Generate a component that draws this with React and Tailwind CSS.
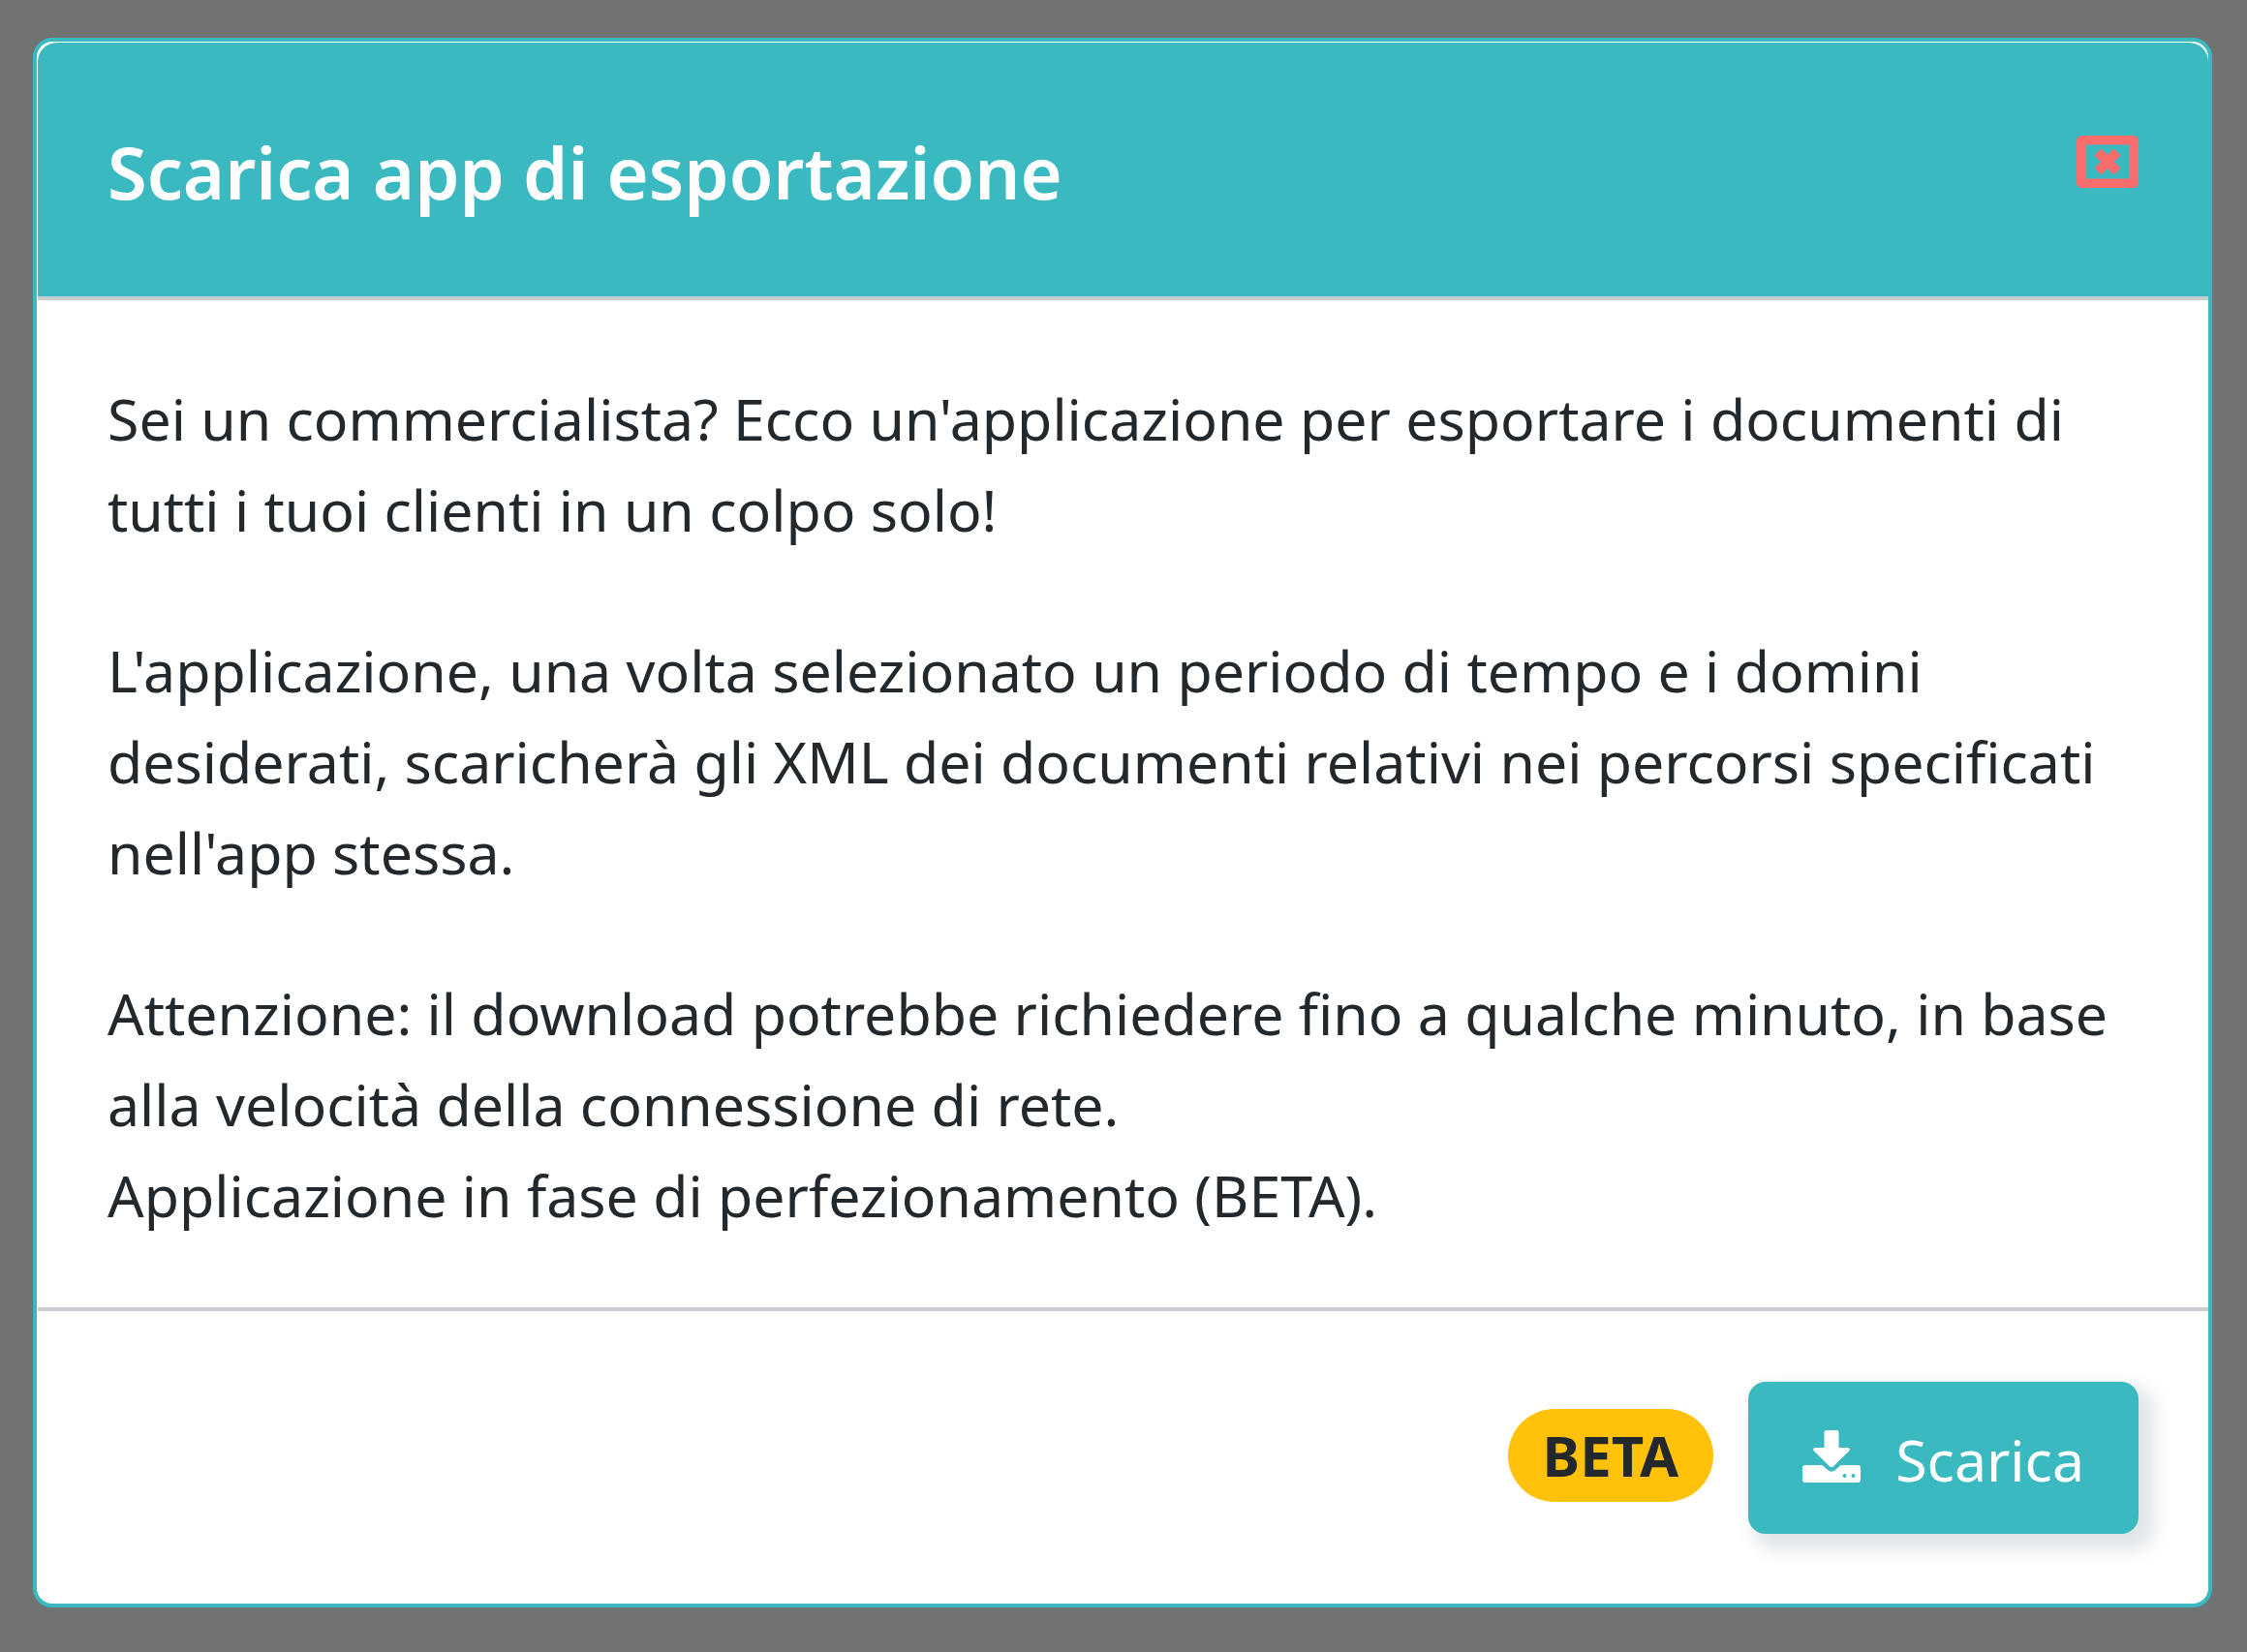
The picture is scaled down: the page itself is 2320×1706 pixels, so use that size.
function CloseIcon() {
  return (
    <svg viewBox="0 0 64 56" className="block h-14 w-16" aria-hidden="true">
      <path
        fill="currentColor"
        fillRule="evenodd"
        d="M6 1H58Q64 1 64 7V49Q64 55 58 55H6Q0 55 0 49V7Q0 1 6 1ZM9.500 10.500V45.500H54.500V10.500Z"
      />
      <path
        fill="currentColor"
        stroke="currentColor"
        strokeWidth="3"
        strokeLinejoin="round"
        d="M25.500 16.500L32 23L38.500 16.500L43.500 21.500L37 28L43.500 34.500L38.500 39.500L32 33L25.500 39.500L20.500 34.500L27 28L20.500 21.500Z"
      />
    </svg>
  );
}

function DownloadIcon() {
  return (
    <svg viewBox="0 0 60 54" className="mt-4 block h-[54px] w-[60px]" fill="currentColor" aria-hidden="true">
      <path d="M24.500 0H35.500Q37.500 0 37.500 2V18H47Q50 18.500 48 21.500L32 37.300Q30 39 28 37.300L12 21.500Q10 18.500 13 18H22.500V2Q22.500 0 24.500 0Z" />
      <path
        fillRule="evenodd"
        d="M3 36H20.500L26.300 41.300Q30 44 33.700 41.300L39.500 36H57Q60 36 60 39V51Q60 54 57 54H3Q0 54 0 51V39Q0 36 3 36ZM43.500 45A2 2 0 1 0 43.500 49A2 2 0 1 0 43.500 45ZM52.500 45A2 2 0 1 0 52.500 49A2 2 0 1 0 52.500 45Z"
      />
    </svg>
  );
}

export default function App() {
  return (
    <div className="min-h-screen bg-[#717372] pt-[39px] pr-9 pb-[46px] pl-[34px] font-['Noto_Sans','Open_Sans',sans-serif] text-[#23282c]">
      <section
        role="dialog"
        aria-labelledby="dialog-title"
        className="rounded-[20px] border-4 border-[#3ab9c1] bg-white pt-px pl-px"
      >
        <header className="flex items-start justify-between rounded-t-[20px] border-b-4 border-[#c8ced3] bg-[#3ab9c1] px-[72px] pt-[75px] pb-[69px]">
          <h1 id="dialog-title" className="text-[74px] leading-[118px] font-semibold text-white">
            Scarica app di esportazione
          </h1>
          <button type="button" aria-label="Chiudi" className="mt-5 text-[#f96d6c]">
            <CloseIcon />
          </button>
        </header>

        <div className="space-y-[72px] px-[72px] pt-[75px] pb-[69px] text-[59px] leading-[94px]">
          <p>
            Sei un commercialista? Ecco un'applicazione per esportare i documenti di tutti i tuoi
            clienti in un colpo solo!
          </p>
          <p>
            L'applicazione, una volta selezionato un periodo di tempo e i domini desiderati,
            scaricherà gli XML dei documenti relativi nei percorsi specificati nell'app stessa.
          </p>
          <p>
            Attenzione: il download potrebbe richiedere fino a qualche minuto, in base alla velocità
            della connessione di rete.
            <br />
            Applicazione in fase di perfezionamento (BETA).
          </p>
        </div>

        <footer className="flex items-start justify-end gap-9 border-t-4 border-[#c8ced3] px-[72px] pt-[73px] pb-[72px]">
          <span className="mt-7 rounded-full bg-[#ffc10a] px-9 text-[58px] leading-[96px] font-bold">
            BETA
          </span>
          <button
            type="button"
            className="flex items-start gap-9 rounded-[18px] bg-[#3ab9c1] px-14 pt-[34px] pb-[30px] text-[59px] leading-[93px] text-white shadow-[11px_11px_18px_7px_#e2e6e9]"
          >
            <DownloadIcon />
            Scarica
          </button>
        </footer>
      </section>
    </div>
  );
}
